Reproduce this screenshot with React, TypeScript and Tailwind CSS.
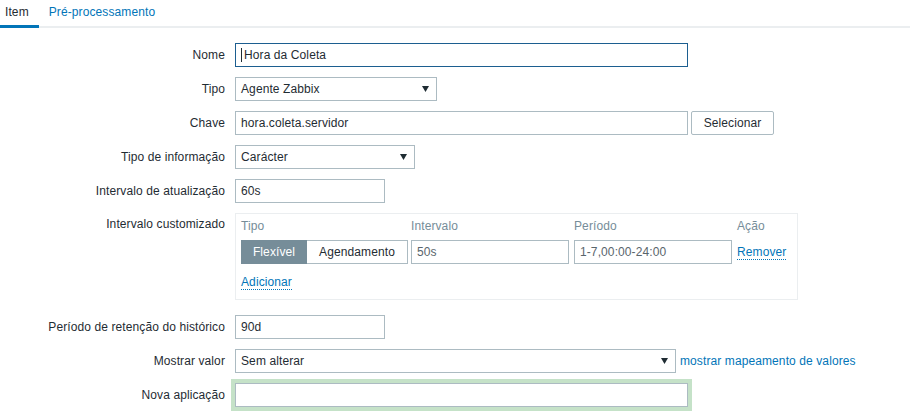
import React from "react";

const txt = "text-[#1f2c33]";
const font = { fontFamily: '"Liberation Sans", Arial, sans-serif' };

function Arrow() {
  return (
    <svg width="7" height="6" viewBox="0 0 7 6" className="shrink-0">
      <path d="M0 0 L7 0 L3.5 6 Z" fill="#1f2c33" />
    </svg>
  );
}

function Input({ w, value, focused, muted }: { w: string; value?: string; focused?: boolean; muted?: boolean }) {
  return (
    <div
      className={`${w} h-[24px] box-border border bg-white flex items-center pl-[5px] ${
        focused ? "border-[#1c5e90]" : "border-[#acbbc2]"
      } ${muted ? "text-[#59656c]" : txt}`}
    >
      {focused && <span className="w-px h-[14px] bg-[#1f2c33] mr-[2px]" />}
      <span>{value}</span>
    </div>
  );
}

function Select({ w, value }: { w: string; value: string }) {
  return (
    <div className={`${w} h-[24px] box-border border border-[#acbbc2] bg-white flex items-center justify-between pl-[5px] pr-[7px] ${txt}`}>
      <span>{value}</span>
      <Arrow />
    </div>
  );
}

function Row({ label, children, className = "mb-[10px]", top }: { label: string; children: React.ReactNode; className?: string; top?: boolean }) {
  return (
    <div className={`flex ${top ? "items-start" : "items-center"} ${className}`}>
      <div className={`w-[225px] text-right ${txt} ${top ? "pt-[4px] leading-[14px]" : ""}`}>{label}</div>
      <div className="ml-[10px] flex items-center">{children}</div>
    </div>
  );
}

export default function App() {
  return (
    <div className="w-[910px] h-[416px] bg-white text-[12px] leading-[14px] tracking-[0.1px] overflow-hidden" style={font}>
      <div className="flex h-[28px] border-b-2 border-[#ebeef0] box-border">
        <div className={`h-[28px] -mb-[2px] box-border border-b-[3px] border-[#0275b8] pl-[5px] pr-[10px] pt-[4px] leading-[16px] ${txt}`}>
          Item
        </div>
        <div className="h-[28px] pl-[10px] pt-[4px] leading-[16px] text-[#0275b8]">Pré-processamento</div>
      </div>

      <div className="pt-[15px]">
        <Row label="Nome">
          <Input w="w-[453px]" value="Hora da Coleta" focused />
        </Row>
        <Row label="Tipo">
          <Select w="w-[202px]" value="Agente Zabbix" />
        </Row>
        <Row label="Chave">
          <Input w="w-[453px]" value="hora.coleta.servidor" />
          <div className={`ml-[3px] w-[83px] h-[24px] box-border border border-[#acbbc2] rounded-[2px] bg-white flex items-center justify-center ${txt}`}>
            Selecionar
          </div>
        </Row>
        <Row label="Tipo de informação">
          <Select w="w-[180px]" value="Carácter" />
        </Row>
        <Row label="Intervalo de atualização">
          <Input w="w-[150px]" value="60s" />
        </Row>
        <Row label="Intervalo customizado" top className="mb-[15px]">
          <div className="w-[563px] h-[87px] box-border border border-[#ebeef0] pl-[5px] pt-[5px]">
            <div className="flex h-[21px] text-[#768d99]">
              <div className="w-[170px]">Tipo</div>
              <div className="w-[163px]">Intervalo</div>
              <div className="w-[163px]">Período</div>
              <div>Ação</div>
            </div>
            <div className="flex h-[24px] items-center">
              <div className="w-[170px] flex">
                <div className="w-[66px] h-[24px] box-border border border-[#768d99] bg-[#768d99] text-white flex items-center justify-center">
                  Flexível
                </div>
                <div className={`w-[101px] h-[24px] box-border border border-l-0 border-[#acbbc2] bg-white flex items-center justify-center ${txt}`}>
                  Agendamento
                </div>
              </div>
              <div className="w-[163px]">
                <Input w="w-[158px]" value="50s" muted />
              </div>
              <div className="w-[163px]">
                <Input w="w-[158px]" value="1-7,00:00-24:00" muted />
              </div>
              <div className="text-[#0275b8] border-b border-dotted border-[#0275b8] leading-[14px] mt-[1px]">Remover</div>
            </div>
            <div className="mt-[11px] flex">
              <span className="text-[#0275b8] border-b border-dotted border-[#0275b8]">Adicionar</span>
            </div>
          </div>
        </Row>
        <Row label="Período de retenção do histórico">
          <Input w="w-[150px]" value="90d" />
        </Row>
        <Row label="Mostrar valor">
          <Select w="w-[441px]" value="Sem alterar" />
          <span className="ml-[4px] text-[#0275b8]">mostrar mapeamento de valores</span>
        </Row>
        <Row label="Nova aplicação">
          <div className="shadow-[0_0_0_4px_#c5e2c8]">
            <Input w="w-[453px]" value="" />
          </div>
        </Row>
      </div>
    </div>
  );
}
